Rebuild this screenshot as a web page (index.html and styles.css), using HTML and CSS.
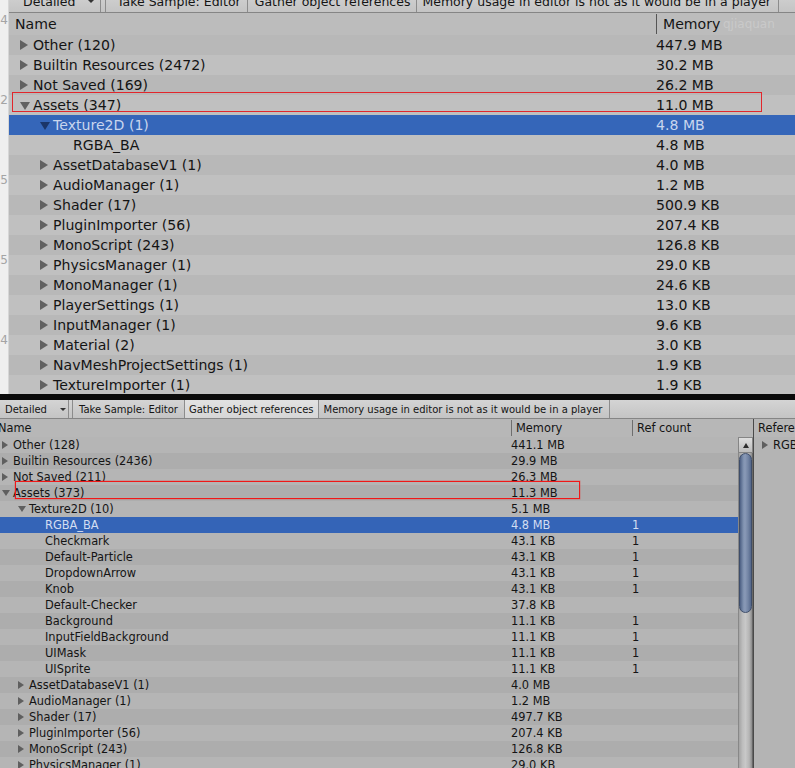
FILE: index.html
```html
<!DOCTYPE html>
<html>
<head>
<meta charset="utf-8">
<link rel="stylesheet" href="styles.css">
</head>
<body>
<div class="top">
  <div class="strip">
    <div class="sl"><span>:4</span></div>
    <div class="sl"><span>:2</span></div>
    <div class="sl"><span>:5</span></div>
    <div class="sl"><span>:5</span></div>
    <div class="sl"><span>:4</span></div>
  </div>
  <div class="tpanel">
    <div class="tool ttool">
      <div class="dd"><span>Detailed</span><i class="ddarr"></i></div>
      <div class="sep"></div>
      <div class="tb tb1">Take Sample: Editor</div>
      <div class="tb tb2">Gather object references</div>
      <div class="tb tb3">Memory usage in editor is not as it would be in a player</div>
    </div>
    <div class="thead">
      <div class="hn">Name</div>
      <div class="hm">Memory<span class="wm">qjiaquan</span></div>
    </div>
    <div class="trows">
      <div class="row"><div class="n l0"><span class="ab"><i class="ar r"></i></span>Other (120)</div><div class="m">447.9 MB</div></div>
      <div class="row"><div class="n l0"><span class="ab"><i class="ar r"></i></span>Builtin Resources (2472)</div><div class="m">30.2 MB</div></div>
      <div class="row"><div class="n l0"><span class="ab"><i class="ar r"></i></span>Not Saved (169)</div><div class="m">26.2 MB</div></div>
      <div class="row mark"><div class="n l0"><span class="ab"><i class="ar d"></i></span>Assets (347)</div><div class="m">11.0 MB</div><div class="rb"></div></div>
      <div class="row sel"><div class="n l1"><span class="ab"><i class="ar d"></i></span>Texture2D (1)</div><div class="m">4.8 MB</div></div>
      <div class="row"><div class="n l2"><span class="ab"></span>RGBA_BA</div><div class="m">4.8 MB</div></div>
      <div class="row"><div class="n l1"><span class="ab"><i class="ar r"></i></span>AssetDatabaseV1 (1)</div><div class="m">4.0 MB</div></div>
      <div class="row"><div class="n l1"><span class="ab"><i class="ar r"></i></span>AudioManager (1)</div><div class="m">1.2 MB</div></div>
      <div class="row"><div class="n l1"><span class="ab"><i class="ar r"></i></span>Shader (17)</div><div class="m">500.9 KB</div></div>
      <div class="row"><div class="n l1"><span class="ab"><i class="ar r"></i></span>PluginImporter (56)</div><div class="m">207.4 KB</div></div>
      <div class="row"><div class="n l1"><span class="ab"><i class="ar r"></i></span>MonoScript (243)</div><div class="m">126.8 KB</div></div>
      <div class="row"><div class="n l1"><span class="ab"><i class="ar r"></i></span>PhysicsManager (1)</div><div class="m">29.0 KB</div></div>
      <div class="row"><div class="n l1"><span class="ab"><i class="ar r"></i></span>MonoManager (1)</div><div class="m">24.6 KB</div></div>
      <div class="row"><div class="n l1"><span class="ab"><i class="ar r"></i></span>PlayerSettings (1)</div><div class="m">13.0 KB</div></div>
      <div class="row"><div class="n l1"><span class="ab"><i class="ar r"></i></span>InputManager (1)</div><div class="m">9.6 KB</div></div>
      <div class="row"><div class="n l1"><span class="ab"><i class="ar r"></i></span>Material (2)</div><div class="m">3.0 KB</div></div>
      <div class="row"><div class="n l1"><span class="ab"><i class="ar r"></i></span>NavMeshProjectSettings (1)</div><div class="m">1.9 KB</div></div>
      <div class="row"><div class="n l1"><span class="ab"><i class="ar r"></i></span>TextureImporter (1)</div><div class="m">1.9 KB</div></div>
    </div>
  </div>
</div>
<div class="black"></div>
<div class="bot">
  <div class="tool btool">
    <div class="dd"><span>Detailed</span><i class="ddarr"></i></div>
    <div class="sep"></div>
    <div class="tb tb1">Take Sample: Editor</div>
    <div class="tb tb2 hot">Gather object references</div>
    <div class="tb tb3">Memory usage in editor is not as it would be in a player</div>
  </div>
  <div class="bmain">
    <div class="bleft">
      <div class="bhead">
        <div class="hn"><span>Name</span></div>
        <div class="hm">Memory</div>
        <div class="hr">Ref count</div>
      </div>
      <div class="bbody">
        <div class="brows">
          <div class="row"><div class="n l0"><span class="ab"><i class="ar r"></i></span>Other (128)</div><div class="m">441.1 MB</div><div class="rc"></div></div>
          <div class="row"><div class="n l0"><span class="ab"><i class="ar r"></i></span>Builtin Resources (2436)</div><div class="m">29.9 MB</div><div class="rc"></div></div>
          <div class="row"><div class="n l0"><span class="ab"><i class="ar r"></i></span>Not Saved (211)</div><div class="m">26.3 MB</div><div class="rc"></div></div>
          <div class="row mark"><div class="n l0"><span class="ab"><i class="ar d"></i></span>Assets (373)</div><div class="m">11.3 MB</div><div class="rc"></div><div class="rb"></div></div>
          <div class="row"><div class="n l1"><span class="ab"><i class="ar d"></i></span>Texture2D (10)</div><div class="m">5.1 MB</div><div class="rc"></div></div>
          <div class="row sel"><div class="n l2"><span class="ab"></span>RGBA_BA</div><div class="m">4.8 MB</div><div class="rc">1</div></div>
          <div class="row"><div class="n l2"><span class="ab"></span>Checkmark</div><div class="m">43.1 KB</div><div class="rc">1</div></div>
          <div class="row"><div class="n l2"><span class="ab"></span>Default-Particle</div><div class="m">43.1 KB</div><div class="rc">1</div></div>
          <div class="row"><div class="n l2"><span class="ab"></span>DropdownArrow</div><div class="m">43.1 KB</div><div class="rc">1</div></div>
          <div class="row"><div class="n l2"><span class="ab"></span>Knob</div><div class="m">43.1 KB</div><div class="rc">1</div></div>
          <div class="row"><div class="n l2"><span class="ab"></span>Default-Checker</div><div class="m">37.8 KB</div><div class="rc"></div></div>
          <div class="row"><div class="n l2"><span class="ab"></span>Background</div><div class="m">11.1 KB</div><div class="rc">1</div></div>
          <div class="row"><div class="n l2"><span class="ab"></span>InputFieldBackground</div><div class="m">11.1 KB</div><div class="rc">1</div></div>
          <div class="row"><div class="n l2"><span class="ab"></span>UIMask</div><div class="m">11.1 KB</div><div class="rc">1</div></div>
          <div class="row"><div class="n l2"><span class="ab"></span>UISprite</div><div class="m">11.1 KB</div><div class="rc">1</div></div>
          <div class="row"><div class="n l1"><span class="ab"><i class="ar r"></i></span>AssetDatabaseV1 (1)</div><div class="m">4.0 MB</div><div class="rc"></div></div>
          <div class="row"><div class="n l1"><span class="ab"><i class="ar r"></i></span>AudioManager (1)</div><div class="m">1.2 MB</div><div class="rc"></div></div>
          <div class="row"><div class="n l1"><span class="ab"><i class="ar r"></i></span>Shader (17)</div><div class="m">497.7 KB</div><div class="rc"></div></div>
          <div class="row"><div class="n l1"><span class="ab"><i class="ar r"></i></span>PluginImporter (56)</div><div class="m">207.4 KB</div><div class="rc"></div></div>
          <div class="row"><div class="n l1"><span class="ab"><i class="ar r"></i></span>MonoScript (243)</div><div class="m">126.8 KB</div><div class="rc"></div></div>
          <div class="row"><div class="n l1"><span class="ab"><i class="ar r"></i></span>PhysicsManager (1)</div><div class="m">29.0 KB</div><div class="rc"></div></div>
        </div>
        <div class="sb">
          <div class="up"><i class="uparr"></i></div>
          <div class="thumb"></div>
        </div>
      </div>
    </div>
    <div class="rpanel">
      <div class="rh">References</div>
      <div class="rr"><span class="ab"><i class="ar r"></i></span>RGBA_BA</div>
    </div>
  </div>
</div>
</body>
</html>
```

FILE: styles.css
```css
* { box-sizing: border-box; }
html, body { margin: 0; padding: 0; }
body {
  width: 795px;
  height: 768px;
  overflow: hidden;
  font-family: "DejaVu Sans", Verdana, sans-serif;
  color: #141414;
  background: #b4b4b4;
}
i { display: block; }

/* ---------- top (zoomed) panel ---------- */
.top { display: flex; height: 394px; overflow: hidden; }
.strip {
  width: 9px; flex: none;
  background: #efefef;
  border-right: 1px solid #d6d6d6;
  display: flex; flex-direction: column;
  padding-top: 12px;
  overflow: hidden;
}
.sl { height: 80px; flex: none; display: flex; justify-content: flex-end; }
.sl span { font-size: 12px; line-height: 16px; color: #a4a4a4; white-space: nowrap; flex: none; }

.tpanel { flex: 1; min-width: 0; display: flex; flex-direction: column; background: #bcbcbc; }

.tool { display: flex; flex: none; white-space: nowrap; background: linear-gradient(#d4d4d4, #c4c4c4); border-bottom: 1px solid #858585; }
.tool .dd { display: flex; align-items: center; justify-content: space-between; border-right: 1px solid #8c8c8c; }
.tool .sep { border-right: 1px solid #8c8c8c; flex: none; }
.tool .tb { display: flex; align-items: center; border-right: 1px solid #8c8c8c; }
.tool .tb.hot { background: linear-gradient(#e2e2e2, #d6d6d6); }
.ddarr { width: 0; height: 0; border-left: 3px solid transparent; border-right: 3px solid transparent; border-top: 3px solid #333; }

.ttool { height: 23px; margin-top: -10px; font-size: 12.5px; }
.ttool .dd { width: 92px; padding: 0 5px 0 14px; }
.ttool .sep { width: 5px; }
.ttool .tb1 { padding: 0 6px 0 11px; }
.ttool .tb2 { padding: 0 6px 0 7px; }
.ttool .tb3 { padding: 0 7px 0 5px; }
.ttool .ddarr { border-left-width: 4px; border-right-width: 4px; border-top-width: 4px; }

.thead { height: 22px; flex: none; display: flex; font-size: 14.1px; }
.thead .hn { width: 647px; flex: none; padding-left: 6px; line-height: 22px; }
.thead .hm { position: relative; margin-top: 1px; height: 20px; line-height: 20px; border-left: 1px solid #555; padding-left: 6px; }
.wm { position: absolute; left: 66px; top: 0; color: rgba(235, 235, 235, 0.3); white-space: nowrap; font-size: 12px; }

.row { display: flex; align-items: center; white-space: nowrap; }
.n { display: flex; align-items: center; flex: none; overflow: hidden; }
.ab { display: flex; align-items: center; flex: none; }
.ar { width: 0; height: 0; }
.m, .rc { flex: none; }

.trows .row { height: 20px; font-size: 14.1px; }
.trows .row:nth-child(odd) { background: #b8b8b8; }
.trows .row:nth-child(even) { background: #c0c0c0; }
.trows .n { width: 647px; }
.trows .n.l0 { padding-left: 11px; }
.trows .n.l1 { padding-left: 31px; }
.trows .n.l2 { padding-left: 51px; }
.trows .ab { width: 13px; }
.trows .ar.r { border-left: 8px solid #616161; border-top: 5px solid transparent; border-bottom: 5px solid transparent; }
.trows .ar.d { border-top: 8px solid #616161; border-left: 5px solid transparent; border-right: 5px solid transparent; margin-top: 1px; }

.row.sel, .trows .row.sel { background: #3566b9; color: #c9d6ee; }
.trows .row.sel .ar.d { border-top-color: #1b3568; }

.mark { position: relative; }
.rb { position: absolute; pointer-events: none; z-index: 2; }
.trows .rb { left: 3px; top: -3px; width: 750px; height: 20px; border: 1px solid #e2262b; }

.black { height: 6px; background: #0b0b0b; }

/* ---------- bottom panel ---------- */
.bot { height: 368px; display: flex; flex-direction: column; }
.btool { height: 19px; font-size: 10px; }
.btool .dd { width: 69px; padding: 0 2px 0 5px; }
.btool .sep { width: 4px; }
.btool .tb1 { padding: 0 6px 0 6px; }
.btool .tb2 { padding: 0 4px 0 4px; }
.btool .tb3 { padding: 0 7px 0 5px; }

.bmain { flex: 1; min-height: 0; display: flex; }
.bleft { width: 753px; flex: none; display: flex; flex-direction: column; }
.bhead { height: 18px; flex: none; display: flex; font-size: 11.4px; background: #b7b7b7; }
.bhead .hn { width: 511px; flex: none; line-height: 18px; overflow: hidden; }
.bhead .hn span { display: block; margin-left: -2px; }
.bhead .hm, .bhead .hr { flex: none; margin-top: 1px; height: 16px; line-height: 16px; border-left: 1px solid #6e6e6e; padding-left: 4px; }
.bhead .hm { width: 121px; }
.bhead .hr { width: 121px; }

.bbody { flex: 1; min-height: 0; display: flex; }
.brows { width: 738px; flex: none; overflow: hidden; }
.brows .row { height: 16px; font-size: 11.4px; }
.brows .row:nth-child(odd) { background: #b5b5b5; }
.brows .row:nth-child(even) { background: #adadad; }
.brows .row.sel { background: #3464b7; color: #d3def2; }
.brows .n { width: 511px; }
.brows .n.l0 { padding-left: 2px; }
.brows .n.l1 { padding-left: 18px; }
.brows .n.l2 { padding-left: 34px; }
.brows .ab { width: 11px; }
.brows .m { width: 121px; }
.brows .rc { width: 106px; }
.ar.r { border-left: 6px solid #5f5f5f; border-top: 4px solid transparent; border-bottom: 4px solid transparent; }
.ar.d { border-top: 6px solid #5f5f5f; border-left: 4px solid transparent; border-right: 4px solid transparent; }
.brows .rb { left: 15px; top: -4px; width: 565px; height: 18px; border: 1px solid #f01818; box-shadow: 0 0 0 0.5px rgba(240, 24, 24, 0.35); }

.sb {
  width: 15px; flex: none;
  display: flex; flex-direction: column;
  background: linear-gradient(to right, #6c6c6c 0, #a3a3a3 1px, #bdbdbd 30%, #c8c8c8 50%, #b4b4b4 75%, #8e8e8e 92%, #4c4c4c 100%);
}
.sb .up {
  height: 16px; flex: none;
  border: 1px solid #858585;
  background: linear-gradient(#dedede, #bdbdbd);
  display: flex; align-items: center; justify-content: center;
}
.uparr { width: 0; height: 0; border-left: 3.5px solid transparent; border-right: 3.5px solid transparent; border-bottom: 5px solid #2e2e2e; }
.sb .thumb {
  height: 160px; flex: none;
  margin: 0 1px;
  border: 1px solid #3f4e6a;
  border-radius: 7px;
  background: linear-gradient(to right, #4d6084, #7e90ae 30%, #8a9ab7 45%, #7183a3 75%, #54678b);
}

.rpanel { flex: 1; min-width: 0; border-left: 1px solid #4a4a4a; background: #b4b4b4; overflow: hidden; font-size: 11.4px; white-space: nowrap; }
.rh { height: 18px; line-height: 18px; padding-left: 4px; background: #b7b7b7; }
.rr { height: 16px; display: flex; align-items: center; padding-left: 8px; }
.rr .ab { width: 11px; }
```
